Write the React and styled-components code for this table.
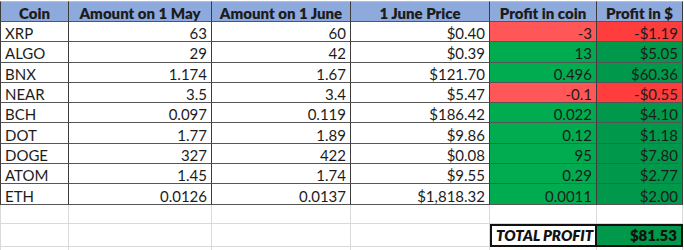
import React from "react";
import styled, { createGlobalStyle } from "styled-components";

const Global = createGlobalStyle`
  html, body { margin: 0; padding: 0; background: #ffffff; }
  body { font-family: "Lato", "Liberation Sans", sans-serif; }
`;

const Sheet = styled.div`
  width: 684px;
  height: 250px;
  overflow: hidden;
  background: #ffffff;
  padding-top: 1px;
  box-sizing: border-box;
`;

const Table = styled.table`
  border-collapse: separate;
  border-spacing: 0;
  table-layout: fixed;
  width: 683px;
  font-size: 15px;
  color: #1c1c1c;
`;

const Row = styled.tr`
  height: ${(p) => p.$h || 20.3}px;
`;

const fills = {
  head: "#8EA9DB",
  redA: "#FF5757",
  redB: "#FF3D3D",
  greenA: "#00AC4F",
  greenB: "#00984A",
  none: "#ffffff",
};

const Cell = styled.td`
  box-sizing: border-box;
  padding: 0 4px;
  padding-top: 3px;
  line-height: 16px;
  white-space: nowrap;
  overflow: hidden;
  vertical-align: middle;
  text-align: ${(p) => p.$align || "right"};
  font-weight: ${(p) => (p.$bold ? 800 : 400)};
  font-style: ${(p) => (p.$italic ? "italic" : "normal")};
  background: ${(p) => fills[p.$fill || "none"]};
  border-right: 1px solid ${(p) => (p.$grid ? "#d9d9d9" : "#3c3c3c")};
  border-bottom: 1px solid ${(p) => (p.$grid ? "#d9d9d9" : "#555555")};
  border-left: ${(p) => (p.$first ? `1px solid ${p.$grid ? "#d9d9d9" : "#3c3c3c"}` : "none")};
  border-top: ${(p) => (p.$top ? "1px solid #bdbdbd" : "none")};
`;

const TotalCell = styled.td`
  box-sizing: border-box;
  padding: 0 4px;
  line-height: 16px;
  white-space: nowrap;
  font-weight: 800;
  font-style: ${(p) => (p.$italic ? "italic" : "normal")};
  text-align: ${(p) => p.$align};
  background: ${(p) => fills[p.$fill || "none"]};
  color: #111111;
  border-top: 2px solid #111111;
  border-bottom: 2px solid #111111;
  border-left: ${(p) => (p.$left ? "2px solid #111111" : "none")};
  border-right: 2px solid #111111;
`;

const cols = [69, 143, 139, 139, 107, 86];

const headers = [
  "Coin",
  "Amount on 1 May",
  "Amount on 1 June",
  "1 June Price",
  "Profit in coin",
  "Profit in $",
];

const data = [
  ["XRP", "63", "60", "$0.40", "-3", "-$1.19"],
  ["ALGO", "29", "42", "$0.39", "13", "$5.05"],
  ["BNX", "1.174", "1.67", "$121.70", "0.496", "$60.36"],
  ["NEAR", "3.5", "3.4", "$5.47", "-0.1", "-$0.55"],
  ["BCH", "0.097", "0.119", "$186.42", "0.022", "$4.10"],
  ["DOT", "1.77", "1.89", "$9.86", "0.12", "$1.18"],
  ["DOGE", "327", "422", "$0.08", "95", "$7.80"],
  ["ATOM", "1.45", "1.74", "$9.55", "0.29", "$2.77"],
  ["ETH", "0.0126", "0.0137", "$1,818.32", "0.0011", "$2.00"],
];

const EmptyRow = ({ h }) => (
  <Row $h={h}>
    {cols.map((_, i) => (
      <Cell key={i} $grid $first={i === 0} />
    ))}
  </Row>
);

export default function App() {
  return (
    <>
      <Global />
      <Sheet>
        <Table>
          <colgroup>
            {cols.map((w, i) => (
              <col key={i} style={{ width: w }} />
            ))}
          </colgroup>
          <tbody>
            <Row $h={21}>
              {headers.map((h, i) => (
                <Cell key={i} $fill="head" $bold $align="center" $top $first={i === 0}>
                  {h}
                </Cell>
              ))}
            </Row>
            {data.map((r) => {
              const neg = r[4].startsWith("-");
              return (
                <Row key={r[0]}>
                  {r.map((v, i) => (
                    <Cell
                      key={i}
                      $first={i === 0}
                      $align={i === 0 ? "left" : "right"}
                      $fill={i === 4 ? (neg ? "redA" : "greenA") : i === 5 ? (neg ? "redB" : "greenB") : "none"}
                    >
                      {v}
                    </Cell>
                  ))}
                </Row>
              );
            })}
            <EmptyRow h={19} />
            <Row $h={23}>
              {cols.slice(0, 4).map((_, i) => (
                <Cell key={i} $grid $first={i === 0} />
              ))}
              <TotalCell $left $italic $align="left">TOTAL PROFIT</TotalCell>
              <TotalCell $fill="greenB" $align="right">$81.53</TotalCell>
            </Row>
            <EmptyRow h={20} />
          </tbody>
        </Table>
      </Sheet>
    </>
  );
}
